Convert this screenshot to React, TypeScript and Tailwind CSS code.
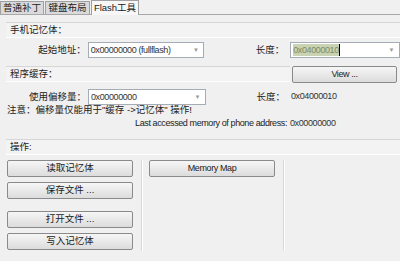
import React from 'react';

const font = { fontFamily: '"Liberation Sans", "Noto Sans CJK SC", sans-serif' };

// CJK text renders a bit larger than the latin text in the original dialog
function Cjk({ children }: { children: React.ReactNode }) {
  return <span className="text-[9.5px] tracking-normal">{children}</span>;
}

function Combo({ value, width, highlight }: { value: string; width: string; highlight?: boolean }) {
  return (
    <div className={`${width} h-[16px] bg-white border border-[#a5acb5] flex items-center pl-[2px] pr-[5px]`}>
      <span
        className={
          highlight
            ? 'bg-[#c9d3b3] text-[#7d8a62] leading-[12px] border-r border-black'
            : 'text-[#333] leading-[12px]'
        }
      >
        {value}
      </span>
      <span className="ml-auto text-[#999] text-[6px] leading-none">▼</span>
    </div>
  );
}

function SectionHeader({ children, extra }: { children: React.ReactNode; extra?: React.ReactNode }) {
  return (
    <div className="flex items-stretch ml-[6px]">
      <div className="flex-1 h-[16px] bg-[#f3f3f3] border-t border-[#d6d6d6] border-b border-b-white flex items-center pl-[4px] text-[#222]">
        {children}
      </div>
      {extra}
    </div>
  );
}

function Btn({ children, className }: { children: React.ReactNode; className?: string }) {
  return (
    <div
      className={`h-[17px] border border-[#8a8a8a] rounded-[2px] bg-gradient-to-b from-[#f6f6f6] to-[#dcdcdc] flex items-center justify-center text-[#222] whitespace-nowrap ${className ?? ''}`}
    >
      {children}
    </div>
  );
}

export default function App() {
  return (
    <div
      className="w-[400px] h-[261px] bg-[#f0f0f0] overflow-hidden text-[9px] tracking-[-0.4px] whitespace-nowrap"
      style={font}
    >
      {/* tabs */}
      <div className="flex items-end h-[15px] border-b border-[#a8a8a8]">
        <div className="h-[13px] w-[44px] bg-[#dadada] border border-[#a0a0a0] border-b-0 flex items-center justify-center text-[#222]">
          <Cjk>普通补丁</Cjk>
        </div>
        <div className="h-[13px] w-[45px] ml-[1px] bg-[#dadada] border border-[#a0a0a0] border-b-0 flex items-center justify-center text-[#222]">
          <Cjk>键盘布局</Cjk>
        </div>
        <div className="h-[15px] w-[48px] ml-[1px] -mb-px bg-[#f7f7f7] border border-[#a0a0a0] border-b-0 flex items-center justify-center text-[#222]">
          <span className="text-[9.5px] tracking-normal">Flash</span>
          <Cjk>工具</Cjk>
        </div>
      </div>

      <div className="pt-[7px]">
        <SectionHeader>
          <Cjk>手机记忆体：</Cjk>
        </SectionHeader>

        <div className="flex items-center mt-[4px] h-[16px]">
          <div className="w-[88px] text-right pr-[2px] text-[#222]">
            <Cjk>起始地址：</Cjk>
          </div>
          <Combo value="0x00000000 (fullflash)" width="w-[117px]" />
          <div className="w-[86px] text-right pr-[6px] text-[#222]">
            <Cjk>长度：</Cjk>
          </div>
          <Combo value="0x04000010" width="w-[110px]" highlight />
        </div>

        <div className="mt-[8px]">
          <SectionHeader extra={<Btn className="w-[105px] ml-[2px] mr-[3px] h-[16px]">View ...</Btn>}>
            <Cjk>程序缓存：</Cjk>
          </SectionHeader>
        </div>

        <div className="flex items-center mt-[6px] h-[16px]">
          <div className="w-[88px] text-right pr-[2px] text-[#222]">
            <Cjk>使用偏移量：</Cjk>
          </div>
          <Combo value="0x00000000" width="w-[118px]" />
          <div className="w-[85px] text-right pr-[6px] text-[#222]">
            <Cjk>长度：</Cjk>
          </div>
          <div className="text-[#333]">0x04000010</div>
        </div>

        <div className="pl-[7px] h-[11px] flex items-center text-[#222]">
          <Cjk>注意：偏移量仅能用于"缓存 -&gt;记忆体" 操作!</Cjk>
        </div>

        <div className="flex items-center h-[16px]">
          <div className="w-[290px] text-right pr-[3px] text-[#222]">Last accessed memory of phone address:</div>
          <div className="text-[#333]">0x00000000</div>
        </div>

        <div className="mt-[7px]">
          <SectionHeader>
            <Cjk>操作:</Cjk>
          </SectionHeader>
        </div>

        <div className="flex mt-[5px] ml-[7px]">
          <div className="w-[126px] flex flex-col">
            <Btn><Cjk>读取记忆体</Cjk></Btn>
            <Btn className="mt-[5px]"><Cjk>保存文件 ...</Cjk></Btn>
            <Btn className="mt-[12px]"><Cjk>打开文件 ...</Cjk></Btn>
            <Btn className="mt-[5px]"><Cjk>写入记忆体</Cjk></Btn>
          </div>
          <div className="w-px h-[91px] bg-[#d8d8d8] border-r border-white ml-[8px] box-content" />
          <div className="ml-[6px]">
            <Btn className="w-[126px]">Memory Map</Btn>
          </div>
          <div className="w-px h-[91px] bg-[#d8d8d8] border-r border-white ml-[8px] box-content" />
        </div>
      </div>
    </div>
  );
}
